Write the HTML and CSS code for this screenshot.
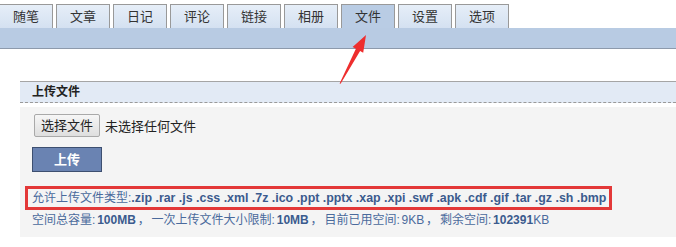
FILE: index.html
```html
<!DOCTYPE html>
<html lang="zh-CN">
<head>
    <meta charset="UTF-8">
    <title>文件上传</title>
    <link rel="stylesheet" href="styles.css">
</head>
<body>
    <div class="tabs">
        <div class="tab">随笔</div>
        <div class="tab">文章</div>
        <div class="tab">日记</div>
        <div class="tab">评论</div>
        <div class="tab">链接</div>
        <div class="tab">相册</div>
        <div class="tab active">文件</div>
        <div class="tab">设置</div>
        <div class="tab">选项</div>
    </div>
    <div class="tab-bar"></div>

    <div class="panel">
        <div class="panel-head">上传文件</div>
        <div class="panel-body">
            <div class="file-row">
                <span class="file-button">选择文件</span>
                <span class="file-name">未选择任何文件</span>
            </div>
            <div class="upload-row">
                <span class="upload-button">上传</span>
            </div>
            <div class="allow">允许上传文件类型:<b>.zip .rar .js .css .xml .7z .ico .ppt .pptx .xap .xpi .swf .apk .cdf .gif .tar .gz .sh .bmp</b></div>
            <div class="quota">空间总容量: <b>100MB</b> ， 一次上传文件大小限制: <b>10MB</b> ， 目前已用空间: 9KB ， 剩余空间: <b>102391</b>KB</div>
        </div>
    </div>

    <!-- annotation arrow -->
    <svg class="arrow" width="676" height="100" viewBox="0 0 676 100">
        <polygon points="366,35 352.6,47 355.9,48.8 339.6,83.5 340.6,83.8 360.1,51.1 363.2,52.8" fill="#ee2e2e"/>
    </svg>
</body>
</html>
```

FILE: styles.css
```css
body {
    margin: 0;
    font-family: "Liberation Sans", "Noto Sans CJK SC", sans-serif;
    font-size: 12px;
    background-color: #fff;
    position: relative;
}

.tabs {
    display: flex;
    gap: 3px;
    padding-top: 4px;
    margin-left: -1px;
}

.tab {
    width: 52px;
    height: 23px;
    line-height: 24px;
    text-align: center;
    font-size: 13px;
    color: #333;
    border: 1px solid #999;
    border-bottom: none;
    background: linear-gradient(#e6eef8, #d4e1f1);
}

.tab.active {
    background: #b9cce4;
}

.tab-bar {
    height: 20px;
    background-color: #b8cbe3;
    border-bottom: 1px solid #8d9aac;
}

.panel {
    margin: 32px 0 0 20px;
}

.panel-head {
    height: 20px;
    line-height: 20px;
    padding-left: 12px;
    font-weight: bold;
    font-size: 12px;
    color: #222;
    background-color: #e2eaf5;
    border-top: 1px solid #a5a5a5;
    border-bottom: 1px dashed #9a9a9a;
}

.panel-body {
    margin-top: 4px;
    padding: 7px 0 8px 12px;
    background-color: #f4f4f4;
}

.file-row {
    display: flex;
    align-items: center;
    gap: 5px;
    margin-left: 2px;
    font-size: 13px;
}

.file-button {
    display: inline-block;
    height: 21px;
    line-height: 21px;
    padding: 0 6px;
    border: 1px solid #a9a9a9;
    border-radius: 2px;
    background: linear-gradient(#f6f6f6, #dedede);
    color: #222;
}

.file-name {
    color: #222;
}

.upload-row {
    margin-top: 10px;
}

.upload-button {
    display: inline-block;
    width: 68px;
    height: 23px;
    line-height: 23px;
    text-align: center;
    font-weight: bold;
    font-size: 13px;
    color: #fff;
    background-color: #6a83b2;
    border: 1px solid #3d4f70;
}

.allow {
    display: inline-block;
    margin: 14px 0 0 -7px;
    padding: 1px 3px 1px 4px;
    line-height: 16px;
    border: 3px solid #e33838;
    color: #4a6a9c;
}

.allow b {
    font-size: 12.4px;
}

.allow b,
.quota b {
    color: #3b5b8e;
}

.quota {
    margin-top: 1px;
    line-height: 18px;
    word-spacing: -1.5px;
    color: #4a6a9c;
}

.arrow {
    position: absolute;
    top: 0;
    left: 0;
}
```
